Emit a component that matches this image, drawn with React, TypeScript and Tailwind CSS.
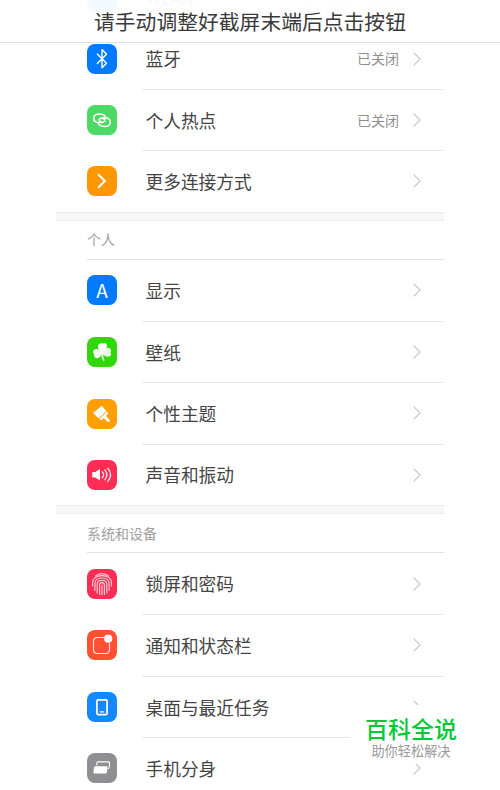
import React from 'react';

type Item = {
  title: string;
  color: string;
  icon: React.ReactNode;
  value?: string;
};

const Svg = ({ children }: { children: React.ReactNode }) => (
  <svg viewBox="0 0 30 30" className="h-[30px] w-[30px]" fill="none" stroke="white" strokeLinecap="round" strokeLinejoin="round">
    {children}
  </svg>
);

const connections: Item[] = [
  { title: 'WLAN', color: 'bg-[#007aff]', value: 'Tenda_4DD010', icon: null },
  {
    title: '蓝牙',
    color: 'bg-[#007aff]',
    value: '已关闭',
    icon: <Svg><path d="M10.3 10L19.5 19.2L15 23.8V5.6L19.5 10.2L10.3 19.4" strokeWidth="1.4" /></Svg>,
  },
  {
    title: '个人热点',
    color: 'bg-[#4cd964]',
    value: '已关闭',
    icon: (
      <Svg>
        <g strokeWidth="1.5">
          <path d="M18.7 12C17.8 10 15.6 9 12.6 9C9.1 9 6.7 10.6 6.7 13.2C6.7 15.8 9.1 17.6 12.6 17.6C15.8 17.6 18 16.6 18 15C18 14.1 17 13.7 15.8 13.8" />
          <path d="M11.3 18.4C12.2 20.4 14.4 21.4 17.4 21.4C20.9 21.4 23.3 19.8 23.3 17.2C23.3 14.6 20.9 12.8 17.4 12.8C14.2 12.8 12 13.8 12 15.4C12 16.3 13 16.7 14.2 16.6" />
        </g>
      </Svg>
    ),
  },
  {
    title: '更多连接方式',
    color: 'bg-[#ff9800]',
    icon: <Svg><path d="M11.6 8.8L17.9 15L11.6 21.2" strokeWidth="2" /></Svg>,
  },
];

const personal: Item[] = [
  {
    title: '显示',
    color: 'bg-[#007aff]',
    icon: <span className="pb-[2px] font-['Noto_Sans_CJK_SC',sans-serif] text-[19px] leading-none text-white">A</span>,
  },
  {
    title: '壁纸',
    color: 'bg-[#32d60a]',
    icon: (
      <Svg>
        <g fill="white" stroke="none">
          <path d="M15 16C11.6 13.4 10.2 10.3 11.2 8.2C12.1 6.4 14.2 5.7 15.6 6.7C17.2 5.3 19.7 6.2 19.9 8.3C20.2 11 18.4 14 15 16Z" />
          <path d="M15.6 14.6C11.4 11.5 8.4 11.3 6.8 13.1C5.6 14.8 6 16.5 7.3 17.3C6.5 19 7.4 20.8 9.2 21.2C12 21.8 14.6 19.4 15.6 14.6Z" opacity=".95" />
          <path d="M14.4 14.8C16.8 11.4 20.3 10 22.4 11.1C24.1 12.1 24.4 14 23.5 15.3C24.8 16.7 24.1 19 22.3 19.5C19.4 20.4 15.7 18.6 14.4 14.8Z" opacity=".88" />
          <path d="M14.4 15C14.2 19 14.7 21.7 16.4 24.2L17.7 23.5C16.4 21.2 16.1 18.4 16.2 15.5Z" opacity=".85" />
        </g>
      </Svg>
    ),
  },
  {
    title: '个性主题',
    color: 'bg-[#ff9f00]',
    icon: (
      <Svg>
        <g fill="white" stroke="none">
          <path d="M14.8 6.8L6.1 14L11.7 19.4L19.3 12Z" />
          <path d="M19.8 12.6L12.4 20L13.2 20.8C13.8 21.3 14.6 21.2 15.2 20.6L16.8 19.3L20.4 22.7C21.9 23.9 23.6 22.3 22.5 20.8L19 17.1L20.7 15.2C21.2 14.5 21.2 14 20.7 13.5Z" />
        </g>
      </Svg>
    ),
  },
  {
    title: '声音和振动',
    color: 'bg-[#ff2d55]',
    icon: (
      <Svg>
        <path d="M5.3 12.1H8.3L13 8.9V20.6L8.3 17.4H5.3Z" fill="white" stroke="none" />
        <path d="M15.4 11.9C17 13.8 17 15.8 15.4 17.7M18 10C20.4 13.1 20.4 16.6 18 19.7M20.7 8.2C24.4 12.5 24.4 17.3 20.7 21.5" strokeWidth="1.3" strokeOpacity=".9" />
      </Svg>
    ),
  },
];

const system: Item[] = [
  {
    title: '锁屏和密码',
    color: 'bg-[#ff2d55]',
    icon: (
      <Svg>
        <g strokeWidth="1.1" strokeOpacity=".8">
          <path d="M8.4 7.2C11.9 3.8 18.1 3.8 21.6 7.2" />
          <path d="M5.6 17V13.6C5.6 9.7 9.4 6.6 15 6.6C20.7 6.6 24.4 9.7 24.4 13.6V17" />
          <path d="M7.9 21.5V14.5C7.9 11.2 10.8 9 15 9C19.2 9 22.1 11.2 22.1 14.5V21.5" />
          <path d="M10.2 24V15.4C10.2 13 12.1 11.3 15 11.3C17.9 11.3 19.8 13 19.8 15.4V24" />
          <path d="M12.6 25.4V16C12.6 14.4 13.4 13.6 15 13.6C16.6 13.6 17.4 14.4 17.4 16V25.4M15 16.2V25.6" />
        </g>
      </Svg>
    ),
  },
  {
    title: '通知和状态栏',
    color: 'bg-[#ff5030]',
    icon: (
      <Svg>
        <path d="M16.5 7.5H10.5C8 7.5 6.5 9 6.5 11.5V19.5C6.5 22 8 23.5 10.5 23.5H18.5C21 23.5 22.5 22 22.5 19.5V13.5" strokeWidth="1.1" strokeOpacity=".9" />
        <circle cx="21.2" cy="8.7" r="4.1" fill="white" stroke="none" />
      </Svg>
    ),
  },
  {
    title: '桌面与最近任务',
    color: 'bg-[#1489ff]',
    icon: (
      <Svg>
        <rect x="9.9" y="7.8" width="10.2" height="14.8" rx="1.3" strokeWidth="1.7" />
        <path d="M13.2 19.8H16.8" strokeWidth="1.2" />
      </Svg>
    ),
  },
  {
    title: '手机分身',
    color: 'bg-[#8e8e93]',
    icon: (
      <Svg>
        <path d="M9.8 12V10.2C9.8 9.3 10.2 8.9 11 8.9H21.4C22.3 8.9 22.8 9.4 22.6 10.3L22.1 14.5C22 15.4 21.6 15.8 20.8 15.8" strokeWidth="1.1" />
        <path d="M8.6 13.2H19.1C20.1 13.2 20.5 13.7 20.4 14.6L19.9 19.3C19.8 20.2 19.4 20.6 18.5 20.6H7.6C6.7 20.6 6.3 20.1 6.4 19.2L7 14.5C7.1 13.6 7.6 13.2 8.6 13.2Z" fill="white" stroke="none" />
      </Svg>
    ),
  },
];

const Chevron = () => (
  <svg viewBox="0 0 8 14" className="h-[14px] w-[8px]" fill="none" stroke="#c4c4c4" strokeWidth="1.1">
    <path d="M.6 .7L7.1 7L.6 13.3" />
  </svg>
);

const Row = ({ item }: { item: Item }) => (
  <li className="group flex h-[61.6px] pl-[31px] last:h-[60.6px]">
    <div className="flex w-[55px] shrink-0 items-center pb-[0.6px]">
      <span className={`flex h-[30px] w-[30px] items-center justify-center rounded-[8px] ${item.color}`}>{item.icon}</span>
    </div>
    <div className="flex flex-1 items-center border-b border-[#e5e5e5] pr-[23px] pl-[3.5px] group-last:border-transparent">
      <span className="flex-1 text-[17.7px] text-[#444]">{item.title}</span>
      {item.value && <span className="mr-[14px] text-[14px] text-[#8f8f8f]">{item.value}</span>}
      <Chevron />
    </div>
  </li>
);

const Section = ({ title, items }: { title?: string; items: Item[] }) => (
  <section>
    {title && (
      <>
        <div className="h-[9px] border-y border-[#ebebeb] bg-[#f7f7f7]" />
        <h2 className="ml-[31px] flex h-[39px] items-center border-b border-[#e3e3e3] text-[14px] text-[#a0a0a0]">{title}</h2>
      </>
    )}
    <ul>
      {items.map((item) => (
        <Row key={item.title} item={item} />
      ))}
    </ul>
  </section>
);

export default function App() {
  return (
    <div className="relative h-[790px] w-[500px] overflow-hidden bg-white font-['Noto_Sans_CJK_SC',sans-serif]">
      <main className="mx-auto -mt-[33.4px] w-[388px]">
        <Section items={connections} />
        <Section title="个人" items={personal} />
        <Section title="系统和设备" items={system} />
      </main>

      <header className="absolute inset-x-0 top-0 flex h-[43px] items-center justify-center border-b border-[#e2e2e2] bg-white/96 pt-px text-[20.8px] text-[#3a3a3a]">
        请手动调整好截屏末端后点击按钮
      </header>

      {/* Marca de agua */}
      <div className="absolute top-[705px] left-[350px] flex h-[59px] w-[122px] flex-col items-center bg-white pt-[8px]">
        <span className="text-[23px] leading-[31px] font-medium text-[#00cb36]">百科全说</span>
        <span className="text-[13.2px] leading-[14px] text-[#999]">助你轻松解决</span>
      </div>
    </div>
  );
}
